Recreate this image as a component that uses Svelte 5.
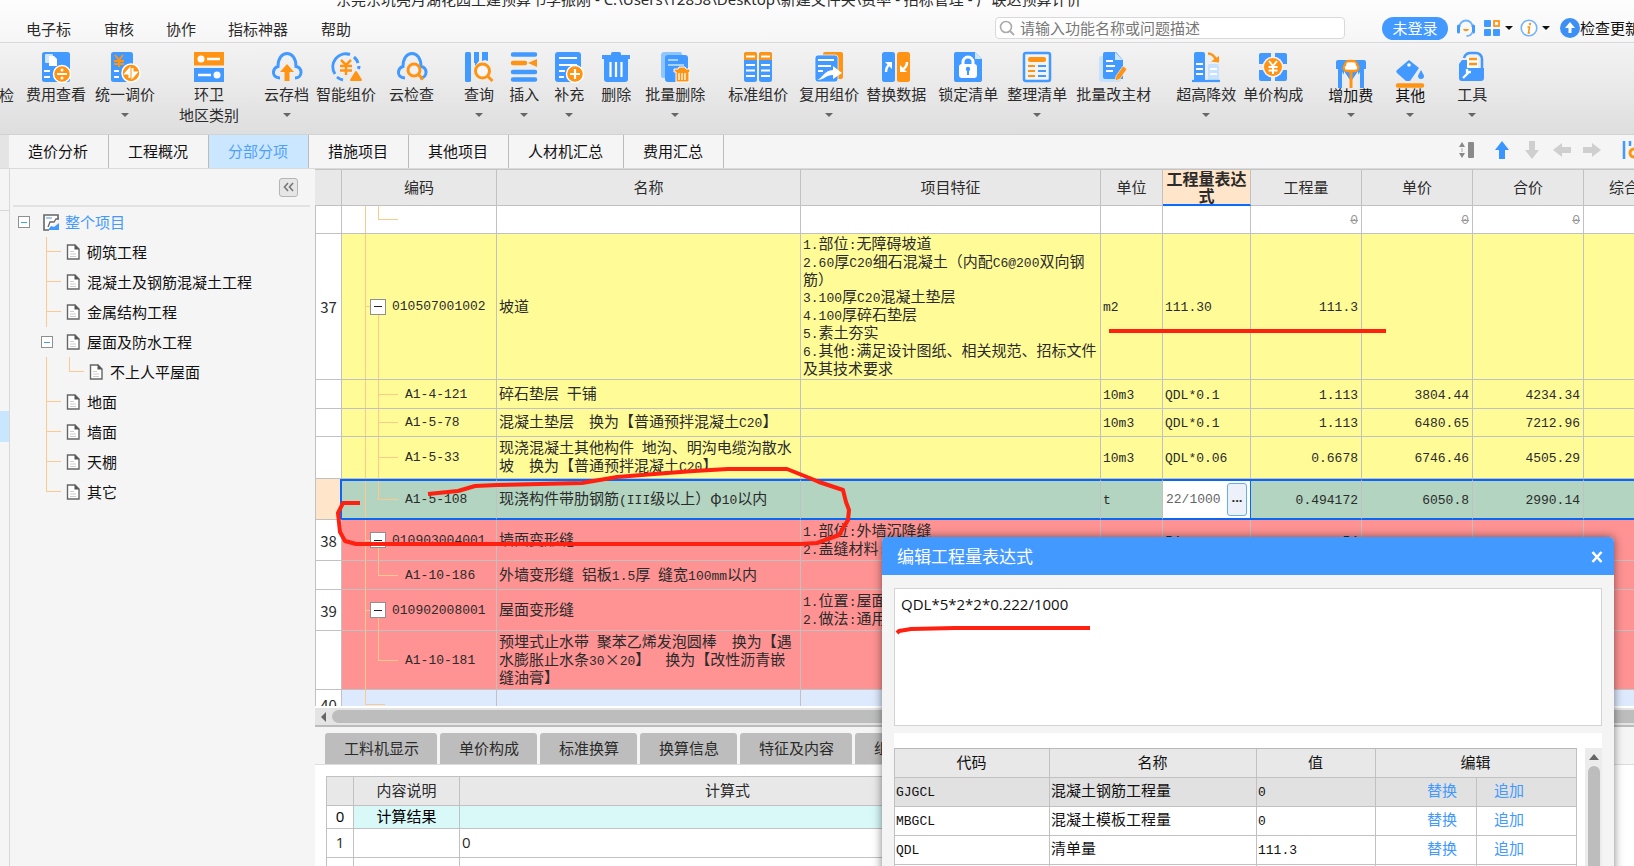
<script>
  const menus = [
    { label: '电子标', gap: 26 },
    { label: '审核', gap: 33 },
    { label: '协作', gap: 32 },
    { label: '指标神器', gap: 32 },
    { label: '帮助', gap: 33 },
  ];

  // gap = space in front of the button
  const tools = [
    { label: '费用查看', icon: 'fee', gap: 12 },
    { label: '统一调价', icon: 'price', gap: 9, menu: true },
    { label: '环卫', icon: 'region', gap: 24, sub: '地区类别' },
    { label: '云存档', icon: 'cloudUp', gap: 25, menu: true },
    { label: '智能组价', icon: 'smart', gap: 7 },
    { label: '云检查', icon: 'cloudFind', gap: 13 },
    { label: '查询', icon: 'query', gap: 30, menu: true },
    { label: '插入', icon: 'insert', gap: 15, menu: true },
    { label: '补充', icon: 'add', gap: 15, menu: true },
    { label: '删除', icon: 'trash', gap: 17 },
    { label: '批量删除', icon: 'trashMany', gap: 14, menu: true },
    { label: '标准组价', icon: 'standard', gap: 23 },
    { label: '复用组价', icon: 'reuse', gap: 11, menu: true },
    { label: '替换数据', icon: 'swap', gap: 7 },
    { label: '锁定清单', icon: 'lock', gap: 12 },
    { label: '整理清单', icon: 'tidy', gap: 9, menu: true },
    { label: '批量改主材', icon: 'edit', gap: 9 },
    { label: '超高降效', icon: 'high', gap: 25, menu: true },
    { label: '单价构成', icon: 'compose', gap: 7 },
    { label: '增加费', icon: 'extra', gap: 25, menu: true, low: true },
    { label: '其他', icon: 'other', gap: 22, menu: true, low: true },
    { label: '工具', icon: 'kit', gap: 32, menu: true },
  ];

  const tabs = ['造价分析', '工程概况', '分部分项', '措施项目', '其他项目', '人材机汇总', '费用汇总'];
  let activeTab = $state('分部分项');

  const tree = [
    { label: '砌筑工程', kind: 'mid' },
    { label: '混凝土及钢筋混凝土工程', kind: 'mid' },
    { label: '金属结构工程', kind: 'mid' },
    { label: '屋面及防水工程', kind: 'open' },
    { label: '不上人平屋面', kind: 'sub' },
    { label: '地面', kind: 'mid' },
    { label: '墙面', kind: 'mid' },
    { label: '天棚', kind: 'mid' },
    { label: '其它', kind: 'end' },
  ];

  const columns = [27, 155, 304, 300, 62, 88, 111, 111, 111, 111];

  const rows = [
    { kind: 'last', tone: 'plain', h: 28, qty: '0', price: '0', total: '0', struck: true },
    {
      no: '37', kind: 'parent', tone: 'yellow', h: 146, code: '010507001002', name: '坡道', unit: 'm2', expr: '111.30', qty: '111.3',
      feature: ['1.部位:无障碍坡道', '2.60厚C20细石混凝土（内配C6@200双向钢筋）', '3.100厚C20混凝土垫层', '4.100厚碎石垫层', '5.素土夯实', '6.其他:满足设计图纸、相关规范、招标文件及其技术要求'],
    },
    { kind: 'child', tone: 'yellow', h: 29, code: 'A1-4-121', name: '碎石垫层 干铺', unit: '10m3', expr: 'QDL*0.1', qty: '1.113', price: '3804.44', total: '4234.34' },
    { kind: 'child', tone: 'yellow', h: 28, code: 'A1-5-78', name: '混凝土垫层　换为【普通预拌混凝土C20】', unit: '10m3', expr: 'QDL*0.1', qty: '1.113', price: '6480.65', total: '7212.96' },
    { kind: 'child', tone: 'yellow', h: 42, code: 'A1-5-33', name: '现浇混凝土其他构件 地沟、明沟电缆沟散水坡　换为【普通预拌混凝土C20】', unit: '10m3', expr: 'QDL*0.06', qty: '0.6678', price: '6746.46', total: '4505.29' },
    { kind: 'last', tone: 'green', h: 41, code: 'A1-5-108', name: '现浇构件带肋钢筋(III级以上）φ10以内', unit: 't', expr: '22/1000', editing: true, qty: '0.494172', price: '6050.8', total: '2990.14' },
    { no: '38', kind: 'parent', tone: 'red', h: 41, code: '010903004001', name: '墙面变形缝', feature: ['1.部位:外墙沉降缝', '2.盖缝材料:'], expr: '54', qty: '54' },
    { kind: 'last', tone: 'red', h: 29, code: 'A1-10-186', name: '外墙变形缝 铝板1.5厚 缝宽100mm以内' },
    { no: '39', kind: 'parent', tone: 'red', h: 41, code: '010902008001', name: '屋面变形缝', feature: ['1.位置:屋面', '2.做法:通用'] },
    { kind: 'last', tone: 'red', h: 59, code: 'A1-10-181', name: '预埋式止水带 聚苯乙烯发泡圆棒　换为【遇水膨胀止水条30×20】　换为【改性沥青嵌缝油膏】' },
    { no: '40', kind: 'end', tone: 'blue', h: 29 },
  ];

  const lowerTabs = ['工料机显示', '单价构成', '标准换算', '换算信息', '特征及内容', '组价方案'];

  const codes = [
    { code: 'GJGCL', name: '混凝土钢筋工程量', value: '0' },
    { code: 'MBGCL', name: '混凝土模板工程量', value: '0' },
    { code: 'QDL', name: '清单量', value: '111.3' },
    { code: '', name: '', value: '' },
  ];

  let expression = $state('QDL*5*2*2*0.222/1000');

  // half-width characters are set in the narrower mono face
  function runs(text = '') {
    return text.match(/[\x20-\x7e]+|[^\x20-\x7e]+/g) ?? [];
  }
</script>

{#snippet mixed(text)}
  {#each runs(text) as part}{#if /^[\x20-\x7e]/.test(part)}<span class="half">{part}</span>{:else}{part}{/if}{/each}
{/snippet}

{#snippet fileIcon()}
  <svg class="file" viewBox="0 0 14 16" aria-hidden="true">
    <path d="M1.5 1h7.5l4 4v10h-11.5z" fill="#fff" stroke="#666" stroke-width="1.4" />
    <path d="M8.500 .5v5h5z" fill="#555" />
    <path d="M4 7.500h4M4 10h6M4 12.500h6" stroke="#ccc" />
  </svg>
{/snippet}

{#snippet icon(name)}
  <svg class="tool-icon" viewBox="0 0 30 30" aria-hidden="true">
    {#if name === 'fee'}
      <rect x="1" width="28" height="30" rx="2.500" fill="#4299ff" />
      <rect x="4" y="2" width="8" height="9" rx="1" fill="#cfe6ff" />
      <path d="M8 4h5l3 3v7h-8z" fill="#fff" />
      <path d="M3 19h6M3 25h6" stroke="#fff" stroke-width="2" />
      <circle cx="21" cy="22" r="8.500" fill="#ff9414" stroke="#fff" stroke-width="1.500" />
      <path d="M16 22h10" stroke="#fff" stroke-width="2" />
      <circle cx="21" cy="18" r="1.500" fill="#fff" />
      <circle cx="21" cy="26" r="1.500" fill="#fff" />
    {:else if name === 'price'}
      <rect x="1" width="22" height="30" rx="2.500" fill="#4299ff" />
      <path d="M5 3l4 5 4-5M4 9h10M4 12h10M9 8v7" stroke="#ff9414" stroke-width="2" fill="none" />
      <path d="M4 19h5M4 25h5" stroke="#fff" stroke-width="2" />
      <circle cx="21" cy="21" r="9" fill="#ff9414" stroke="#fff" stroke-width="1.500" />
      <path d="M19.500 26v-9l-4 4.500h3M22.500 16v9l4-4.500h-3" stroke="#fff" stroke-width="2" fill="#fff" />
    {:else if name === 'region'}
      <rect width="30" height="13.500" fill="#ff9414" />
      <rect y="16" width="30" height="14" fill="#4299ff" />
      <circle cx="7" cy="7" r="3.500" fill="#fff" />
      <circle cx="23" cy="23" r="3.500" fill="#fff" />
      <path d="M13 7h13M4 23h13" stroke="#fff" stroke-width="2.500" />
    {:else if name === 'cloudUp' || name === 'cloudFind'}
      <path d="M8 26C3 26 1 23 1.500 19.500 2 16.500 4 15 6 14.500 6 6 10 1.500 15 1.500s9 4.500 9 13c3 .5 5 3 5 6 0 3-2.500 5.500-6 5.500" fill="none" stroke="#4299ff" stroke-width="3" />
      {#if name === 'cloudUp'}
        <path d="M15 12l7 8h-4.500v9h-5v-9H8z" fill="#ff9414" />
      {:else}
        <circle cx="17" cy="18" r="6" fill="#f1f1f1" stroke="#ff9414" stroke-width="3" />
        <path d="M21.500 22.500l4.500 5" stroke="#ff9414" stroke-width="3" />
      {/if}
    {:else if name === 'smart'}
      <path d="M19 2.500A13 13 0 0 0 4 22M6 25a13 13 0 0 0 6 3M23 5a13 13 0 0 1 4 6M28 14a13 13 0 0 1-.5 3" fill="none" stroke="#4299ff" stroke-width="3" />
      <path d="M10 8l5 5 5-5M9 14h12M9 18.500h12M15 13v10" stroke="#ff9414" stroke-width="2.500" fill="none" />
      <path d="M25 20l5 8H20z" fill="#ff9414" stroke="#ff9414" stroke-linejoin="round" stroke-width="2" />
    {:else if name === 'query'}
      <rect x="1" width="6" height="30" rx="1.500" fill="#4299ff" />
      <path d="M10 0h5v9l-4 5v-3h-1zM18 0h6v9l-3-1-3 1z" fill="#4299ff" />
      <circle cx="18.500" cy="19" r="7" fill="#f6f6f6" stroke="#ff9414" stroke-width="3" />
      <path d="M23.500 24l5 5" stroke="#ff9414" stroke-width="3" />
    {:else if name === 'insert'}
      <path d="M4 2.500h22M4 20h22M4 27.500h22" stroke="#4299ff" stroke-width="4.500" stroke-linecap="round" />
      <path d="M4 11h12" stroke="#ff9414" stroke-width="4.500" stroke-linecap="round" />
      <path d="M19 11l9-4v8z" fill="#ff9414" />
    {:else if name === 'add'}
      <rect x="1" width="26" height="30" rx="3" fill="#4299ff" />
      <path d="M5 6h18M5 13h18M5 19h6M5 25h5" stroke="#fff" stroke-width="2.200" />
      <circle cx="21" cy="22" r="8.500" fill="#ff9414" stroke="#fff" stroke-width="1.500" />
      <path d="M16 22h10M21 17v10" stroke="#fff" stroke-width="2.200" />
    {:else if name === 'trash'}
      <path d="M1 3h9c0-3 1-3 2-3h6c1 0 2 0 2 3h9v4h-2v20a3 3 0 0 1-3 3H6a3 3 0 0 1-3-3V7H1z" fill="#4299ff" />
      <path d="M9.500 10v15M15 10v15M20.500 10v15" stroke="#fff" stroke-width="2.200" />
    {:else if name === 'trashMany'}
      <path d="M3 0h18l2 4v22H3a2 2 0 0 1-2-2V2z" fill="#8fc6ff" />
      <rect x="5" y="3" width="23" height="27" rx="3" fill="#4299ff" />
      <path d="M8 8h10M8 13h16" stroke="#a5d0ff" stroke-width="2" />
      <path d="M14 17h4l1-2h6l1 2h4v3h-1v10H16V20h-2z" fill="#ff9414" stroke="#fff" stroke-width="1" />
      <path d="M19 21v7M22 21v7M25 21v7" stroke="#fff" stroke-width="1.300" />
    {:else if name === 'standard'}
      <rect x="1" width="13" height="30" rx="2.500" fill="#4299ff" />
      <rect x="16" width="13" height="30" rx="2.500" fill="#4299ff" />
      <path d="M1 8V2.500a2.500 2.500 0 0 1 2.500-2.500h8A2.500 2.500 0 0 1 14 2.500V8zM16 8V2.500a2.500 2.500 0 0 1 2.500-2.500h8A2.500 2.500 0 0 1 29 2.500V8z" fill="#ff9414" />
      <path d="M3 4.500h9M18 4.500h9M3 13h9M18 13h9M3 18.500h9M18 18.500h9M3 24h9M18 24h9" stroke="#fff" stroke-width="2" />
    {:else if name === 'reuse'}
      <rect x="9" width="20" height="27" rx="2" fill="#ff9414" />
      <rect x="1" y="3" width="23" height="27" rx="3" fill="#4299ff" stroke="#fff" stroke-width=".7" />
      <path d="M4 8h16M4 14h13M4 19h5" stroke="#fff" stroke-width="2.200" />
      <path d="M3 28c5-1 7-10 16-10v-4l9 7-9 6v-4c-7 0-9 5-16 5z" fill="#fff" />
    {:else if name === 'swap'}
      <rect x="1" width="13" height="30" rx="2.500" fill="#4299ff" />
      <rect x="16" width="13" height="30" rx="2.500" fill="#ff9414" />
      <path d="M5 20c0-4 1-6 4-8" stroke="#fff" stroke-width="2.500" fill="none" />
      <path d="M26 10c0 4-2 6-4 7" stroke="#fff" stroke-width="2.500" fill="none" />
      <path d="M4 10h7v7zM19 13v7h7z" fill="#fff" />
    {:else if name === 'lock'}
      <path d="M3 0h19l7 7v21a2 2 0 0 1-2 2H3a2 2 0 0 1-2-2V2a2 2 0 0 1 2-2z" fill="#4299ff" />
      <path d="M22 0l7 7h-7z" fill="#cfe6ff" />
      <rect x="6" y="12" width="18" height="14" rx="3" fill="#fff" />
      <path d="M10 13V10a5 5 0 0 1 10 0v3" stroke="#fff" stroke-width="3" fill="none" />
      <circle cx="15" cy="17" r="2.200" fill="#4299ff" />
      <path d="M15 17v6" stroke="#4299ff" stroke-width="2" />
    {:else if name === 'tidy'}
      <rect x="2" y="1" width="26" height="28" rx="2" fill="#f3f3f3" stroke="#4299ff" stroke-width="2.500" />
      <rect x="6" y="5" width="18" height="5" rx="2" fill="#ff9414" />
      <path d="M6 14h7M6 19h7M6 24h7" stroke="#ff9414" stroke-width="2.200" />
      <path d="M16 14h8M16 19h8M16 24h8" stroke="#4299ff" stroke-width="2.200" />
    {:else if name === 'edit'}
      <rect x="0" y="4" width="22" height="26" rx="3" fill="#c6e2ff" />
      <path d="M6 0h11l7 8v19H6a2 2 0 0 1-2-2V2a2 2 0 0 1 2-2z" fill="#4299ff" />
      <path d="M16 0l8 8h-8z" fill="#cfe6ff" />
      <path d="M7 9h7M7 14h9M7 19h7" stroke="#fff" stroke-width="2" />
      <path d="M24 14l4 3-7 10-5 2 1-5z" fill="#ff9414" stroke="#eee" stroke-width=".7" />
    {:else if name === 'high'}
      <path d="M3 2a2 2 0 0 1 2-2h7a2 2 0 0 1 2 2v27H3z" fill="#4299ff" />
      <rect x="17" y="12" width="11" height="17" rx="1.500" fill="#c6e2ff" />
      <path d="M5 12h7M5 17h7M5 22h7M19 17h7M19 22h7" stroke="#fff" stroke-width="2" />
      <path d="M1 29h28" stroke="#4299ff" stroke-width="2.200" />
      <path d="M17 1.500c4 0 6 2 8 6" stroke="#ff9414" stroke-width="2.500" fill="none" />
      <path d="M20 9.500l8 1V4z" fill="#ff9414" />
    {:else if name === 'compose'}
      <path d="M3 1h10v28H3a2 2 0 0 1-2-2V18h28V27a2 2 0 0 1-2 2H17V1h10a2 2 0 0 1 2 2v9H1V3a2 2 0 0 1 2-2z" fill="#4299ff" />
      <path d="M15 0v30M0 15h30" stroke="#ececec" stroke-width="3" />
      <circle cx="15" cy="15" r="10.500" fill="#f2f2f2" />
      <circle cx="15" cy="15" r="9" fill="#ff9414" />
      <path d="M11 9l4 5 4-5M10.500 15h9M10.500 18.500h9M15 14v8" stroke="#fff" stroke-width="2" fill="none" />
    {:else if name === 'extra'}
      <path d="M2 7h26a2 2 0 0 1 2 2v7h-2v19h-4V19l-6 8h-6l-6-8v16H2V16H0V9a2 2 0 0 1 2-2z" fill="#4299ff" />
      <path d="M8 18v17h14V18l-6 9h-2z" fill="#ededed" />
      <path d="M8 17l5 8v-8zM22 17l-5 8v-8z" fill="#4299ff" />
      <path d="M11 18c-4 0-4-5-2-6 0-4 3-4 6-4s6 0 6 4c2 1 2 6-2 6z" fill="#fff" stroke="#ff9414" stroke-width="2.300" />
      <path d="M15 17v18" stroke="#ff9414" stroke-width="3" />
    {:else if name === 'other'}
      <path d="M14 7l10 8-9 13H11L2 20a2 2 0 0 1 0-3z" fill="#4299ff" />
      <circle cx="14" cy="12" r="1.800" fill="#fff" />
      <path d="M26 17c2 4 3 5 3 6a3 3 0 0 1-6 0c0-1 1-2 3-6z" fill="#4299ff" />
      <path d="M3 32.500h24" stroke="#ff9414" stroke-width="4.500" stroke-linecap="round" />
    {:else}
      <path d="M7 6a7 7 0 0 1 7-5h5a6 6 0 0 1 6 6v15" fill="none" stroke="#4299ff" stroke-width="2.500" />
      <path d="M5 8h5v8h17v10a3 3 0 0 1-3 3H5a3 3 0 0 1-3-3V12z" fill="#4299ff" />
      <path d="M10 5h11v11H10z" fill="#fff" />
      <path d="M12 7h8M12 12h8" stroke="#ff9414" stroke-width="2.300" />
      <path d="M6 26l6-6M10 17v3h4" stroke="#fff" stroke-width="2.300" fill="none" />
    {/if}
  </svg>
{/snippet}

<div class="app">
  <header>
    <div class="title-bar">
      <span>东莞东坑亮月湖花园土建预算书李振刚 - C:\Users\12858\Desktop\新建文件夹\费率 - 招标管理 - 广联达预算计价</span>
    </div>
    <div class="menu-bar">
      <nav>
        {#each menus as m}
          <a href="#menu" style="margin-left: {m.gap}px">{m.label}</a>
        {/each}
      </nav>
      <label class="search">
        <svg viewBox="0 0 16 16" width="16" height="16" aria-hidden="true">
          <circle cx="7" cy="7" r="5.500" fill="none" stroke="#aaa" stroke-width="1.600" />
          <path d="M11 11l4 4" stroke="#aaa" stroke-width="1.800" />
        </svg>
        <input type="text" aria-label="搜索" placeholder="请输入功能名称或问题描述" />
      </label>
      <div class="account">
        <button class="login">未登录</button>
        <button class="bare" aria-label="客服">
          <svg viewBox="0 0 20 20" width="20" height="20">
            <path d="M3.500 9a6.500 6.500 0 0 1 13 0" fill="none" stroke="#6fb2ff" stroke-width="2" />
            <path d="M2.500 8v6M17.500 8v6" stroke="#4299ff" stroke-width="3" stroke-linecap="round" />
            <path d="M16.500 14c-1 3-3 4-6 4" fill="none" stroke="#6fb2ff" stroke-width="1.800" />
            <path d="M7 11c1 3 5 3 6 0z" fill="#ff9414" />
          </svg>
        </button>
        <button class="bare" aria-label="应用">
          <svg viewBox="0 0 18 18" width="18" height="18">
            <rect x="1" y="1" width="7" height="7" rx="1" fill="#4299ff" />
            <rect x="11" y="2" width="5" height="5" fill="none" stroke="#ff9414" stroke-width="1.800" />
            <rect x="1" y="10" width="7" height="7" rx="1" fill="#4299ff" />
            <rect x="10" y="10" width="7" height="7" rx="1" fill="#4299ff" />
          </svg>
          <i class="caret dark"></i>
        </button>
        <button class="bare" aria-label="信息">
          <svg viewBox="0 0 18 18" width="18" height="18">
            <circle cx="9" cy="9" r="7.800" fill="#fff" stroke="#6fb2ff" stroke-width="1.600" />
            <circle cx="10" cy="5" r="1.200" fill="#ff9414" />
            <path d="M7.500 8h2l-1 6h1.500" fill="none" stroke="#ff9414" stroke-width="1.600" />
          </svg>
          <i class="caret dark"></i>
        </button>
        <button class="bare update">
          <svg viewBox="0 0 20 20" width="20" height="20">
            <circle cx="10" cy="10" r="10" fill="#3b8ff5" />
            <path d="M10 4l5 6h-3.500v5h-3v-5H5z" fill="#fff" />
          </svg>
          检查更新
        </button>
      </div>
    </div>
    <div class="toolbar">
      <span class="cut">检</span>
      {#each tools as t}
        <button class="tool" class:low={t.low} style="margin-left: {t.gap}px">
          {@render icon(t.icon)}
          <span>{t.label}</span>
          {#if t.sub}<span>{t.sub}</span>{/if}
          {#if t.menu}<i class="caret"></i>{/if}
        </button>
      {/each}
    </div>
  </header>

  <div class="tab-row">
    {#each tabs as tab}
      <button class="tab" class:active={tab === activeTab} onclick={() => (activeTab = tab)}>{tab}</button>
    {/each}
    <div class="moves">
      <svg viewBox="0 0 18 20" width="18" height="20" aria-hidden="true">
        <path d="M4 2l3 5H1zM4 18l3-5H1z" fill="#888" />
        <path d="M4 8v4" stroke="#aaa" />
        <rect x="10" y="2" width="6" height="16" rx="1" fill="#8a8a8a" />
      </svg>
      {#each [0, 180, 270, 90] as turn}
        <svg class:on={turn === 0} viewBox="0 0 20 20" width="20" height="20" aria-hidden="true">
          <path transform="rotate({turn} 10 10)" d="M10 1l7 9h-4v9H7v-9H3z" />
        </svg>
      {/each}
      <svg class="last-move" viewBox="0 0 18 20" width="18" height="20" aria-hidden="true">
        <path d="M2 1v18M8 1v5M14 1v5" stroke="#4299ff" stroke-width="2.500" />
        <circle cx="12" cy="13" r="4" fill="none" stroke="#ff9414" stroke-width="3" />
      </svg>
    </div>
  </div>

  <div class="body">
    <div class="strip"><i></i></div>

    <aside>
      <div class="aside-top"><button class="fold" aria-label="收起">
        <svg viewBox="0 0 12 10" width="12" height="10"><path d="M5 1l-3.500 4L5 9M10 1L6.500 5 10 9" fill="none" stroke="#777" stroke-width="1.600" /></svg>
      </button></div>
      <ul class="tree">
        <li class="root">
          <button class="toggle" aria-label="折叠"></button>
          <svg class="project" viewBox="0 0 17 17" aria-hidden="true">
            <path d="M15 5V1H1v15h5" fill="#fff" stroke="#666" stroke-width="1.600" />
            <path d="M3 4h6" stroke="#9ecbff" stroke-width="2" />
            <path d="M5 13l2-5h4l2-3h3" fill="none" stroke="#666" stroke-width="1.300" />
            <path d="M5 16l3-4 3 1 5-4v7z" fill="#4299ff" />
          </svg>
          整个项目
        </li>
        {#each tree as node}
          <li class={node.kind}>
            {#if node.kind === 'open'}<button class="toggle" aria-label="折叠"></button>{/if}
            {@render fileIcon()}
            {node.label}
          </li>
        {/each}
      </ul>
    </aside>

    <main>
      <div class="grid-wrap">
        <table class="grid">
          <colgroup>
            {#each columns as w}<col style="width: {w}px" />{/each}
          </colgroup>
          <thead>
            <tr>
              <th></th>
              <th>编码</th>
              <th>名称</th>
              <th>项目特征</th>
              <th>单位</th>
              <th class="current">工程量表达式</th>
              <th>工程量</th>
              <th>单价</th>
              <th>合价</th>
              <th>综合单价</th>
            </tr>
          </thead>
          <tbody>
            {#each rows as row}
              <tr class={row.tone} style="height: {row.h}px">
                <td class="no">{row.no ?? ''}</td>
                <td class="code {row.kind}">
                  <div>
                    {#if row.kind === 'parent'}<button class="box" aria-label="折叠"></button>{/if}
                    {@render mixed(row.code)}
                  </div>
                </td>
                <td>{@render mixed(row.name)}</td>
                <td>
                  {#each row.feature ?? [] as line}<div>{@render mixed(line)}</div>{/each}
                </td>
                <td>{@render mixed(row.unit)}</td>
                {#if row.editing}
                  <td class="editing">
                    <div>
                      <input type="text" aria-label="工程量表达式" value={row.expr} />
                      <button aria-label="更多">···</button>
                    </div>
                  </td>
                {:else}
                  <td>{@render mixed(row.expr)}</td>
                {/if}
                <td class="num" class:struck={row.struck}>{@render mixed(row.qty)}</td>
                <td class="num" class:struck={row.struck}>{@render mixed(row.price)}</td>
                <td class="num" class:struck={row.struck}>{@render mixed(row.total)}</td>
                <td></td>
              </tr>
            {/each}
          </tbody>
        </table>
      </div>
      <div class="hscroll"><i class="left"></i><span></span></div>

      <section class="lower">
        <div class="lower-tabs">
          {#each lowerTabs as tab}<button>{tab}</button>{/each}
        </div>
        <table class="calc">
          <colgroup><col class="c-no" /><col class="c-name" /><col class="c-expr" /></colgroup>
          <thead>
            <tr><th></th><th>内容说明</th><th>计算式</th></tr>
          </thead>
          <tbody>
            <tr class="result"><td>0</td><td>计算结果</td><td></td></tr>
            <tr><td>1</td><td></td><td>0</td></tr>
            <tr><td>2</td><td></td><td>0</td></tr>
          </tbody>
        </table>
      </section>
    </main>
  </div>

  <div class="dialog" role="dialog" aria-label="编辑工程量表达式">
    <div class="dialog-head">
      <span>编辑工程量表达式</span>
      <button aria-label="关闭">
        <svg viewBox="0 0 12 12" width="12" height="12"><path d="M1.500 1l9 10M10.500 1l-9 10" stroke="#fff" stroke-width="2.600" /></svg>
      </button>
    </div>
    <div class="dialog-body">
      <textarea aria-label="表达式" spellcheck="false" bind:value={expression}></textarea>
      <div class="code-panel">
        <table>
          <colgroup><col class="k1" /><col class="k2" /><col class="k3" /><col class="k4" /><col class="k5" /></colgroup>
          <thead>
            <tr><th>代码</th><th>名称</th><th>值</th><th colspan="2">编辑</th></tr>
          </thead>
          <tbody>
            {#each codes as c, i}
              <tr class:picked={i === 0}>
                <td><span class="half">{c.code}</span></td>
                <td>{c.name}</td>
                <td><span class="half">{c.value}</span></td>
                <td class="replace"><a href="#replace">替换</a></td>
                <td class="append"><a href="#append">追加</a></td>
              </tr>
            {/each}
          </tbody>
        </table>
        <div class="vscroll"><i></i><span></span></div>
      </div>
    </div>
  </div>

  <svg class="marks" width="1634" height="866" aria-hidden="true">
    <path d="M1109 331H1386" />
    <path d="M428 494l30-3 17-5 22-1 85-2 35-6 37-3 40-3 34-2h59l25 10 7 3 24 8 3 12 3 8-1 10-9 15-22 8-17 1H356l-11-3-5-9-2-19 5-10 17 0" />
    <path d="M897 633l2-2 12-2 44-1H1090" />
  </svg>
</div>

<style>
  :global(body) {
    margin: 0;
    overflow: hidden;
  }

  .app {
    position: relative;
    display: flex;
    flex-direction: column;
    height: 100vh;
    overflow: hidden;
    background: #f5f5f5;
    color: #2b2b2b;
    font: 15px/20px 'Open Sans', 'Noto Sans CJK SC', sans-serif;
  }

  .app button,
  .app input,
  .app textarea {
    box-sizing: border-box;
    margin: 0;
    padding: 0;
    border: 0;
    background: none;
    color: inherit;
    font: inherit;
  }

  a {
    color: inherit;
    text-decoration: none;
  }

  /* header */
  header {
    background: linear-gradient(#fdfdfd, #f6f6f6 42px, #f2f2f2 46px, #ebebeb 80px, #dedede);
    border-bottom: 1px solid #d2d2d2;
  }

  .title-bar {
    display: flex;
    align-items: flex-end;
    height: 9px;
    overflow: hidden;
    padding-left: 336px;
    font-family: 'Noto Sans', 'Noto Sans CJK SC', sans-serif;
    white-space: nowrap;
  }

  .menu-bar {
    display: flex;
    align-items: center;
    height: 33px;
    border-bottom: 1px solid #d9d9d9;
  }

  nav {
    display: flex;
    flex: 1;
    padding-top: 7px;
  }

  .search {
    display: flex;
    align-items: center;
    box-sizing: border-box;
    gap: 5px;
    width: 350px;
    height: 22px;
    margin-top: 4px;
    padding-left: 3px;
    border: 1px solid #d9d9d9;
    border-radius: 4px;
    background: #fff;
  }

  .search input {
    flex: 1;
    min-width: 0;
    outline: 0;
  }

  .search input::placeholder {
    color: #777;
    opacity: 1;
  }

  .account {
    display: flex;
    align-items: center;
    width: 252px;
    margin: 5px 0 0 37px;
    white-space: nowrap;
  }

  .app .login {
    flex: none;
    width: 66px;
    height: 23px;
    margin-right: 8px;
    border-radius: 12px;
    background: #4299ff;
    color: #fff;
  }

  .app .bare {
    display: flex;
    flex: none;
    align-items: center;
    margin-right: 7px;
  }

  .caret {
    border: 4px solid transparent;
    border-top: 4px solid #666;
    border-bottom: 0;
  }

  .caret.dark {
    margin-left: 4px;
    border-top-color: #111;
  }

  .app .update {
    margin-left: 3px;
    color: #111;
  }

  .toolbar {
    display: flex;
    height: 91px;
    overflow: hidden;
    white-space: nowrap;
  }

  .cut {
    margin: 42px 0 0 -1px;
  }

  .app .tool {
    display: flex;
    flex: none;
    flex-direction: column;
    align-items: center;
    height: 91px;
    padding-top: 9px;
    line-height: 21px;
  }

  .app .tool.low {
    padding-top: 10px;
    color: #111;
  }

  .tool-icon {
    width: 30px;
    height: 30px;
    margin-bottom: 2px;
    overflow: visible;
  }

  .tool .caret {
    margin-top: 8px;
  }

  .tool.low .caret {
    margin-top: 7px;
  }

  /* page tabs */
  .tab-row {
    display: flex;
    height: 33px;
    padding-left: 9px;
    border-bottom: 1px solid #dadada;
    background: linear-gradient(90deg, #e4e4e4 9px, #f5f5f5 9px);
  }

  .app .tab {
    padding: 0 20px 2px 19px;
    border-right: 1px solid #bbb;
    color: #111;
  }

  .app .tab.active {
    background: #cbe7ff;
    color: #4f9fff;
  }

  .moves {
    display: flex;
    align-items: center;
    gap: 10px;
    width: 176px;
    margin-left: auto;
    padding-bottom: 3px;
    overflow: hidden;
  }

  .moves svg {
    flex: none;
    fill: #cfcfcf;
  }

  .moves svg.on {
    margin-left: 6px;
    fill: #3b95ff;
  }

  .moves .last-move {
    margin-left: 10px;
  }

  .body {
    display: flex;
    flex: 1;
    min-height: 0;
  }

  .strip {
    display: flex;
    flex: 0 0 9px;
    flex-direction: column;
    border-right: 1px solid #d8d8d8;
  }

  .strip::before {
    height: 41px;
    border-bottom: 1px solid #d8d8d8;
    content: '';
  }

  .strip i {
    height: 31px;
    margin-top: 200px;
    background: #c9e6ff;
  }

  /* project tree */
  aside {
    flex: 0 0 305px;
  }

  .aside-top {
    display: flex;
    align-items: center;
    justify-content: flex-end;
    height: 36px;
    margin: 0 5px 0 3px;
    padding-right: 12px;
    border-bottom: 2px solid #e2e2e2;
  }

  .app .fold {
    display: flex;
    align-items: center;
    justify-content: center;
    width: 19px;
    height: 19px;
    border: 1px solid #b5b5b5;
    border-radius: 3px;
    background: #e6e6e6;
  }

  .tree {
    --line: linear-gradient(#fdc98f, #fdc98f);
    margin: 0;
    padding: 0;
    color: #111;
    list-style: none;
  }

  .tree li {
    display: flex;
    align-items: center;
    height: 30px;
    background-repeat: no-repeat;
    white-space: nowrap;
  }

  .tree .root {
    padding-left: 8px;
    color: #4299ff;
  }

  .tree .mid,
  .tree .end {
    padding-left: 56px;
    background-image: var(--line), var(--line);
    background-position: 36px 0, 36px 14px;
    background-size: 1px 30px, 15px 1px;
  }

  .tree .end {
    background-size: 1px 15px, 15px 1px;
  }

  .tree .open {
    padding-left: 31px;
  }

  .tree .sub {
    padding-left: 79px;
    background-image: var(--line), var(--line), var(--line);
    background-position: 36px 0, 59px 0, 59px 14px;
    background-size: 1px 30px, 1px 15px, 15px 1px;
  }

  .app .toggle,
  .app .box {
    flex: none;
    border: 1px solid #8f8f8f;
    background: linear-gradient(#3fa3d8, #3fa3d8) center / 6px 1px no-repeat #fff;
  }

  .app .toggle {
    width: 12px;
    height: 12px;
    margin-right: 13px;
  }

  .file {
    flex: none;
    width: 14px;
    height: 16px;
    margin-right: 7px;
  }

  .project {
    width: 17px;
    height: 17px;
    margin-right: 5px;
  }

  /* bill of quantities */
  main {
    display: flex;
    flex: 1;
    flex-direction: column;
    min-width: 0;
  }

  .grid-wrap {
    flex: 1;
    min-height: 0;
    overflow: hidden;
    border-top: 1px solid #c4c4c4;
    border-bottom: 2px solid #fff;
    background: #fff;
  }

  table {
    border-spacing: 0;
    table-layout: fixed;
  }

  th {
    background: #e8e8e8;
    font-weight: 400;
  }

  th,
  td {
    box-sizing: border-box;
    padding: 0 2px 2px;
    border-right: 1px solid #c1c1c1;
    border-bottom: 1px solid #c1c1c1;
  }

  .grid {
    width: 1380px;
    font-family: 'Noto Sans CJK SC', sans-serif;
    line-height: 17px;
    text-spacing-trim: space-all;
  }

  .grid td {
    padding-bottom: 3px;
  }

  .grid th {
    height: 36px;
  }

  .grid th.current {
    padding: 0 2px;
    border-bottom: 2px solid #0a6cff;
    background: #ffe5c9;
    font-size: 16px;
    font-weight: 700;
  }

  .half {
    font-family: 'Liberation Mono', monospace;
    font-size: 13px;
    line-height: 1;
  }

  .yellow td {
    background-color: #fffc98;
  }

  .red td {
    background-color: #ff9292;
  }

  .blue td {
    background-color: #dde9fd;
  }

  .green td {
    border-top: 2px solid #0a66f5;
    border-bottom: 2px solid #0a66f5;
    background-color: #b2d4c0;
  }

  .grid td.no {
    padding: 0;
    border-left: 1px solid #c1c1c1;
    background-color: #fff;
    text-align: center;
  }

  .grid .green td.no {
    border-top: 0;
    border-right: 2px solid #0a66f5;
    border-bottom: 1px solid #c1c1c1;
    background-color: #ffe5c9;
  }

  .grid td.num {
    padding-right: 3px;
    text-align: right;
  }

  .struck .half {
    color: #999;
    text-decoration: line-through;
  }

  .grid td.code {
    --line: linear-gradient(#fdca8c, #fdca8c);
    padding-bottom: 0;
    background-image: var(--line), var(--line), var(--line);
    background-repeat: no-repeat;
    background-position: 23px 0, 36px 0, 36px 50%;
    background-size: 1px 100%, 1px 100%, 20px 1px;
  }

  .code div {
    display: flex;
    align-items: center;
    padding-left: 61px;
  }

  .grid td.last {
    background-size: 1px 100%, 1px 50%, 20px 1px;
  }

  .grid td.parent {
    background-position: 23px 0, 36px 100%, 23px 50%;
    background-size: 1px 100%, 1px 50%, 6px 1px;
  }

  .parent div {
    gap: 6px;
    padding-left: 26px;
  }

  .grid td.end {
    background-image: var(--line), var(--line);
    background-position: 23px 0, 23px 14px;
    background-size: 1px 15px, 20px 1px;
  }

  .app .box {
    width: 16px;
    height: 16px;
    background: linear-gradient(#222, #222) center / 8px 1px no-repeat #fff;
  }

  .grid td.editing {
    padding: 0 3px;
    border-right-color: #0a66f5;
    background: #fff;
  }

  .editing div {
    display: flex;
    align-items: center;
    gap: 2px;
  }

  .app .editing input {
    flex: 1;
    min-width: 0;
    color: #666;
    font: 13px/20px 'Liberation Mono', monospace;
  }

  .app .editing button {
    flex: none;
    width: 20px;
    height: 33px;
    border: 1px solid #62b0f2;
    border-radius: 3px;
    background: #edf1fa;
    font: 700 13px/20px 'Open Sans', sans-serif;
  }

  .hscroll {
    display: flex;
    flex: none;
    align-items: center;
    gap: 6px;
    height: 17px;
    padding-left: 6px;
    border-bottom: 2px solid #bbb;
    background: #e4e4e4;
  }

  .hscroll .left {
    border: 5px solid transparent;
    border-right-color: #666;
    border-left: 0;
  }

  .hscroll span {
    flex: 1;
    height: 13px;
    border-radius: 7px 0 0 7px;
    background: #bdbdbd;
  }

  .lower {
    flex: 0 0 139px;
    overflow: hidden;
    background: linear-gradient(#f5f5f5 37px, #fff 37px);
  }

  .lower-tabs {
    display: flex;
    gap: 3px;
    padding: 6px 0 0 10px;
    border-bottom: 1px solid #dcdcdc;
  }

  .app .lower-tabs button {
    height: 31px;
    padding: 0 18px 2px 19px;
    border-radius: 3px 3px 0 0;
    background: #bdbdbd;
  }

  .calc {
    width: 670px;
    margin: 11px 0 0 11px;
    border-top: 1px solid #c1c1c1;
    border-left: 1px solid #c1c1c1;
  }

  .c-no { width: 27px; }
  .c-name { width: 106px; }

  .calc th,
  .calc td {
    height: 29px;
  }

  .calc td:nth-child(-n + 2) {
    text-align: center;
  }

  .calc .result td {
    height: 23px;
    color: #000;
  }

  .calc .result td + td {
    background: #d9f8f8;
  }

  /* expression editor window */
  .dialog {
    position: absolute;
    top: 537px;
    right: 20px;
    width: 732px;
    height: 360px;
    border-radius: 5px 5px 0 0;
    background: #f4f4f4;
    box-shadow: 0 0 10px rgba(0, 0, 0, 0.5);
    color: #111;
  }

  .dialog-head {
    display: flex;
    align-items: center;
    justify-content: space-between;
    height: 36px;
    padding: 2px 11px 0 15px;
    border-radius: 5px 5px 0 0;
    background: #4299ff;
    color: #fff;
    font-size: 17px;
  }

  .dialog-body {
    padding: 13px 12px;
  }

  .app textarea {
    display: block;
    width: 100%;
    height: 138px;
    padding: 5px 6px;
    border: 1px solid #d3d3d3;
    outline: 0;
    background: #fff;
    resize: none;
  }

  .code-panel {
    display: flex;
    gap: 8px;
    margin-top: 7px;
    padding-top: 15px;
    background: #fff;
  }

  .code-panel table {
    flex: 1;
    border-top: 1px solid #b9b9b9;
    border-left: 1px solid #c1c1c1;
  }

  .k1 { width: 155px; }
  .k2 { width: 207px; }
  .k3 { width: 119px; }
  .k4 { width: 101px; }

  .code-panel th,
  .code-panel td {
    height: 29px;
    padding-left: 1px;
  }

  .code-panel td {
    padding-bottom: 4px;
  }

  .picked td {
    background: #e1e1e1;
  }

  .code-panel a {
    color: #4299ff;
  }

  .code-panel .replace {
    padding-right: 19px;
    text-align: right;
  }

  .code-panel .append {
    padding-left: 17px;
  }

  .vscroll {
    display: flex;
    flex: 0 0 17px;
    flex-direction: column;
    align-items: center;
    gap: 6px;
    padding-top: 6px;
    box-sizing: border-box;
    background: #ececec;
  }

  .vscroll i {
    border: 5px solid transparent;
    border-top: 0;
    border-bottom: 6px solid #666;
  }

  .vscroll span {
    flex: 1;
    width: 12px;
    border-radius: 6px 6px 0 0;
    background: #bdbdbd;
  }

  .marks {
    position: absolute;
    top: 0;
    left: 0;
    pointer-events: none;
  }

  .marks path {
    fill: none;
    stroke: #fe2010;
    stroke-width: 4;
    stroke-linejoin: round;
  }
</style>
